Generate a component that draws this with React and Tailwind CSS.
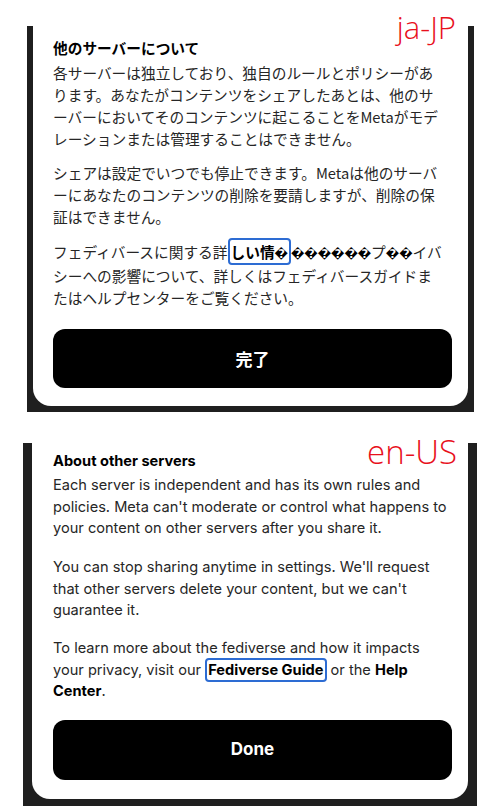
import React from "react";

const jaFont = { fontFamily: '"Noto Sans CJK JP", "Noto Sans", sans-serif' };
const enFont = { fontFamily: 'Inter, "Noto Sans", sans-serif' };
const labelFont = { fontFamily: '"Open Sans", sans-serif' };

const Line = ({ children }) => <span className="block whitespace-nowrap">{children}</span>;

const LinkBox = ({ children }) => (
  <span className="font-bold text-black border-2 border-[#2d6cd3] rounded-[4px] px-[1px] py-[1px]">
    {children}
  </span>
);

// broken glyphs, as they show in the ja string
const Bad = ({ n = 1 }) => (
  <span className="text-[12px] font-bold text-black" style={{ fontFamily: '"DejaVu Sans", sans-serif' }}>
    {"\uFFFD".repeat(n)}
  </span>
);

const JaPanel = () => (
  <section className="relative h-[420px] pt-[26px]">
    <div className="absolute right-[44px] top-[12px] text-[31px] leading-none text-[#e8101c] font-light" style={labelFont}>
      ja-JP
    </div>
    <div className="ml-[27px] w-[447px] bg-[#1f1f1f] px-[6px] pb-[6px]">
      <div className="bg-white rounded-b-[18px] pl-[20px] pr-[16px] pt-[11px] pb-[18px] text-[14.7px] leading-[22px] text-[#262626]" style={jaFont}>
        <h2 className="font-bold text-black mb-[3px]">他のサーバーについて</h2>
        <p className="mb-[12px]">
          <Line>各サーバーは独立しており、独自のルールとポリシーがあ</Line>
          <Line>ります。あなたがコンテンツをシェアしたあとは、他のサ</Line>
          <Line>ーバーにおいてそのコンテンツに起こることをMetaがモデ</Line>
          <Line>レーションまたは管理することはできません。</Line>
        </p>
        <p className="mb-[13px]">
          <Line>シェアは設定でいつでも停止できます。Metaは他のサーバ</Line>
          <Line>ーにあなたのコンテンツの削除を要請しますが、削除の保</Line>
          <Line>証はできません。</Line>
        </p>
        <p>
          <Line>
            フェディバースに関する詳<LinkBox>しい情<Bad /></LinkBox>
            <Bad n={6} />プ<Bad n={2} />イバ
          </Line>
          <Line>シーへの影響について、詳しくはフェディバースガイドま</Line>
          <Line>たはヘルプセンターをご覧ください。</Line>
        </p>
        <button className="mt-[20px] w-full h-[59px] rounded-[12px] bg-black text-white text-[17px] font-bold">
          完了
        </button>
      </div>
    </div>
  </section>
);

const EnPanel = () => (
  <section className="relative h-[391px] pt-[23px]">
    <div className="absolute right-[43px] top-[15px] text-[33px] leading-none text-[#e8101c] font-light" style={labelFont}>
      en-US
    </div>
    <div className="ml-[23px] w-[454px] bg-[#1f1f1f] px-[9px] pb-[7px]">
      <div className="bg-white rounded-b-[18px] pl-[21px] pr-[16px] pt-[8px] pb-[19px] text-[14.6px] leading-[21.5px] text-[#262626]" style={enFont}>
        <h2 className="font-bold text-black mb-[2.5px]">About other servers</h2>
        <p className="mb-[17.5px]">
          <Line>Each server is independent and has its own rules and</Line>
          <Line>policies. Meta can't moderate or control what happens to</Line>
          <Line>your content on other servers after you share it.</Line>
        </p>
        <p className="mb-[16.5px]">
          <Line>You can stop sharing anytime in settings. We'll request</Line>
          <Line>that other servers delete your content, but we can't</Line>
          <Line>guarantee it.</Line>
        </p>
        <p>
          <Line>To learn more about the fediverse and how it impacts</Line>
          <Line>
            your privacy, visit our <LinkBox>Fediverse Guide</LinkBox> or the{" "}
            <span className="font-bold text-black">Help</span>
          </Line>
          <Line>
            <span className="font-bold text-black">Center</span>.
          </Line>
        </p>
        <button className="mt-[17px] w-full h-[60px] rounded-[12px] bg-black text-white text-[17px] font-bold">
          Done
        </button>
      </div>
    </div>
  </section>
);

export default function App() {
  return (
    <div className="w-[500px] h-[811px] bg-white overflow-hidden">
      <JaPanel />
      <EnPanel />
    </div>
  );
}
